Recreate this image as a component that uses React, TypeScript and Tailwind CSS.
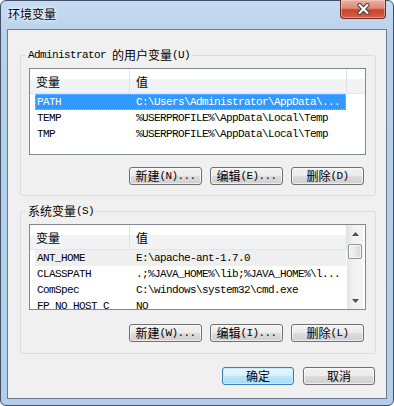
import type { ReactNode } from "react";

// Windows 7 "环境变量" dialog

const MONO = "font-['Liberation_Mono',monospace] text-[11px] tracking-[-0.6px] leading-[14px]";
const CJK = "font-['Noto_Sans_CJK_SC',sans-serif] text-[12px] leading-[14px]";

const USER_VARS = [
  { name: "PATH", value: "C:\\Users\\Administrator\\AppData\\...", sel: true },
  { name: "TEMP", value: "%USERPROFILE%\\AppData\\Local\\Temp" },
  { name: "TMP", value: "%USERPROFILE%\\AppData\\Local\\Temp" },
];

const SYS_VARS = [
  { name: "ANT_HOME", value: "E:\\apache-ant-1.7.0", hover: true },
  { name: "CLASSPATH", value: ".;%JAVA_HOME%\\lib;%JAVA_HOME%\\l..." },
  { name: "ComSpec", value: "C:\\windows\\system32\\cmd.exe" },
  { name: "FP_NO_HOST_C", value: "NO" },
];

function M({ children }: { children: ReactNode }) {
  return <span className={`${MONO} whitespace-pre`}>{children}</span>;
}

function C({ children }: { children: ReactNode }) {
  return <span className={CJK}>{children}</span>;
}

function Btn({ label, hint, def, w = "w-[73px]" }: { label: string; hint?: string; def?: boolean; w?: string }) {
  return (
    <div
      className={`flex h-[18px] ${w} items-center justify-center rounded-[3px] border text-black ${
        def
          ? "border-[#3c7fb1] bg-[linear-gradient(#eaf6fd,#d9f0fc_50%,#bee6fd_50%,#a7d9f5)] shadow-[inset_0_0_0_1px_#c8ecfc]"
          : "border-[#707070] bg-[linear-gradient(#f2f2f2,#ebebeb_50%,#dddddd_50%,#cfcfcf)] shadow-[inset_0_0_0_1px_rgba(255,255,255,0.6)]"
      }`}
    >
      <C>{label}</C>
      {hint && <M>{hint}</M>}
    </div>
  );
}

function Header({ tail }: { tail?: boolean }) {
  return (
    <div className="flex h-[25px] shrink-0 border-b border-[#e5e5e5] bg-linear-to-b from-white from-40% to-[#f2f3f5] to-40%">
      <div className="flex w-[100px] items-center border-r border-[#dfe1e3] pl-[6px] pt-[2px]">
        <C>变量</C>
      </div>
      <div className="flex w-[217px] items-center border-r border-[#dfe1e3] pl-[6px] pt-[2px]">
        <C>值</C>
      </div>
      {tail && <div className="flex-1" />}
    </div>
  );
}

function Row({ name, value, sel, hover }: { name: string; value: string; sel?: boolean; hover?: boolean }) {
  return (
    <div
      className={`ml-[5px] flex h-[16px] w-[311px] shrink-0 items-center overflow-hidden whitespace-nowrap ${
        sel
          ? "bg-[#3399ff] text-white outline-1 outline-dotted outline-[#f0a868] -outline-offset-1"
          : hover
          ? "bg-[#efefef] text-black"
          : "text-black"
      }`}
    >
      <span className={`${MONO} w-[99px] shrink-0 pl-[2px]`}>{name}</span>
      <span className={`${MONO} pl-[2px]`}>{value}</span>
    </div>
  );
}

function Arrow({ down }: { down?: boolean }) {
  return (
    <svg width="7" height="4" viewBox="0 0 7 4">
      <path d={down ? "M0 0H7L3.5 4Z" : "M3.5 0L7 4H0Z"} fill="#4d4d4d" />
    </svg>
  );
}

function Group({ legend, children, className }: { legend: ReactNode; children: ReactNode; className: string }) {
  return (
    <fieldset className={`ml-[12px] mr-[10px] rounded-[3px] border border-[#d5dfe5] ${className}`}>
      <legend className="ml-[5px] px-[2px]">
        <div className="flex h-[14px] items-center text-black">{legend}</div>
      </legend>
      {children}
    </fieldset>
  );
}

export default function App() {
  return (
    <div className="h-[406px] w-[394px] overflow-hidden bg-white">
      <div className="relative flex h-full w-full flex-col rounded-[6px] border border-[#3f5068] bg-[linear-gradient(#c6dbf1,#b8d0ea_40px,#b4cde8)] px-[6px] pb-[6px]">
        {/* Title bar */}
        <div className="flex h-[28px] shrink-0 items-center pb-[2px] pl-[1px]">
          <span className="font-['Noto_Sans_CJK_SC',sans-serif] text-[12px] leading-[14px] text-black [text-shadow:0_0_6px_#fff,0_0_3px_#fff]">
            环境变量
          </span>
        </div>
        <div className="absolute -top-[1px] right-[7px] flex h-[19px] w-[46px] items-center justify-center rounded-b-[4px] border border-t-0 border-[#6d2b23] bg-[linear-gradient(#eab0a2,#dd8a76_45%,#c8452b_55%,#d4603f)] shadow-[inset_0_0_0_1px_rgba(255,220,210,0.45)]">
          <svg width="13" height="12" viewBox="0 0 13 12">
            <path d="M2.5 2L10.5 10M10.5 2L2.5 10" stroke="#3b3b3b" strokeWidth="4" strokeLinecap="round" />
            <path d="M2.5 2L10.5 10M10.5 2L2.5 10" stroke="#ffffff" strokeWidth="2.2" strokeLinecap="round" />
          </svg>
        </div>

        {/* Client area */}
        <div className="flex flex-1 flex-col border border-[#6c7c8e] bg-[#f0f0f0]">
          <Group
            className="mt-[18px] pb-[10px]"
            legend={
              <>
                <M>Administrator </M>
                <C>的用户变量</C>
                <M>(U)</M>
              </>
            }
          >
            <div className="ml-[8px] mt-[6px] flex h-[87px] w-[337px] flex-col overflow-hidden border border-[#828790] bg-white">
              <Header tail />
              {USER_VARS.map((v) => (
                <Row key={v.name} {...v} />
              ))}
            </div>
            <div className="mt-[12px] flex justify-end gap-[8px] pr-[11px]">
              <Btn label="新建" hint="(N)..." />
              <Btn label="编辑" hint="(E)..." />
              <Btn label="删除" hint="(D)" />
            </div>
          </Group>

          <Group
            className="mt-[8px] pb-[11px]"
            legend={
              <>
                <C>系统变量</C>
                <M>(S)</M>
              </>
            }
          >
            <div className="ml-[8px] mt-[6px] flex h-[86px] w-[337px] overflow-hidden border border-[#828790] bg-white">
              <div className="flex w-[317px] flex-col overflow-hidden">
                <Header />
                {SYS_VARS.map((v) => (
                  <Row key={v.name} {...v} />
                ))}
              </div>
              <div className="flex w-[16px] flex-col border-l border-[#e6e6e6] bg-[linear-gradient(90deg,#e6e6e6,#f2f2f2_40%,#f4f4f4)]">
                <div className="flex h-[17px] items-center justify-center">
                  <Arrow />
                </div>
                <div className="mr-[1px] mt-[2px] h-[15px] rounded-[2px] border border-[#959595] bg-[linear-gradient(90deg,#f4f4f4,#e9e9e9_50%,#d8d8d8)] shadow-[inset_0_0_0_1px_rgba(255,255,255,0.7)]" />
                <div className="flex-1" />
                <div className="flex h-[17px] items-center justify-center">
                  <Arrow down />
                </div>
              </div>
            </div>
            <div className="mt-[14px] flex justify-end gap-[8px] pr-[11px]">
              <Btn label="新建" hint="(W)..." />
              <Btn label="编辑" hint="(I)..." />
              <Btn label="删除" hint="(L)" />
            </div>
          </Group>

          <div className="mt-[13px] flex justify-end gap-[9px] pr-[11px]">
            <Btn label="确定" def w="w-[72px]" />
            <Btn label="取消" w="w-[72px]" />
          </div>
        </div>
      </div>
    </div>
  );
}
